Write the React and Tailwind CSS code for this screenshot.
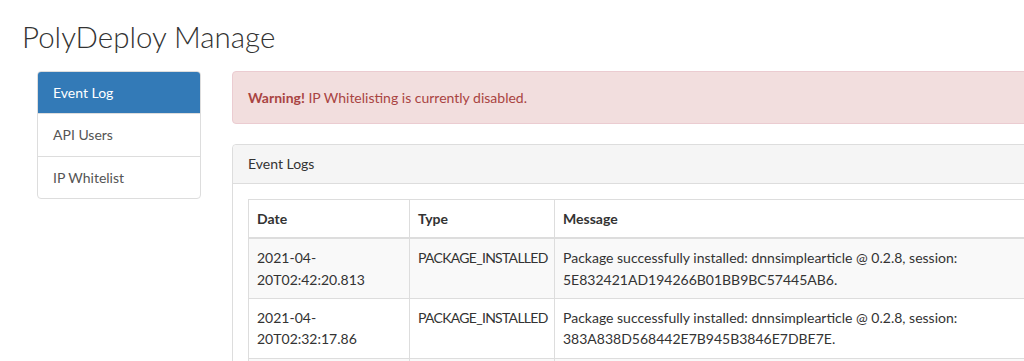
const rows = [
  {
    date: '2021-04-20T02:42:20.813',
    type: 'PACKAGE_INSTALLED',
    message: 'Package successfully installed: dnnsimplearticle @ 0.2.8, session: 5E832421AD194266B01BB9BC57445AB6.',
  },
  {
    date: '2021-04-20T02:32:17.86',
    type: 'PACKAGE_INSTALLED',
    message: 'Package successfully installed: dnnsimplearticle @ 0.2.8, session: 383A838D568442E7B945B3846E7DBE7E.',
  },
  { date: '\u00a0', type: '\u00a0', message: '\u00a0' },
];

const nav = ['Event Log', 'API Users', 'IP Whitelist'];

export default function App() {
  return (
    <div className="w-[1024px] h-[361px] overflow-hidden bg-white font-['Lato',sans-serif] text-[14px] leading-[21.4px] text-[#333]">
      <h2 className="pl-[22px] pt-[20px] text-[29.5px] font-light leading-[33px] text-[#333]">PolyDeploy Manage</h2>

      <div className="flex mt-[18px] pl-[37px]">
        <div className="w-[164px] shrink-0">
          <div className="flex flex-col border border-[#ddd] rounded-[4px] overflow-hidden">
            {nav.map((item, i) => (
              <div
                key={item}
                className={
                  i === 0
                    ? 'px-[15px] py-[10px] bg-[#337ab7] text-white'
                    : 'px-[15px] py-[10px] border-t border-[#ddd] text-[#555]'
                }
              >
                {item}
              </div>
            ))}
          </div>
        </div>

        <div className="ml-[31px] w-[900px] shrink-0">
          <div className="p-[15px] bg-[#f2dede] border border-[#ebccd1] rounded-[4px] text-[#a94442]">
            <strong className="font-bold">Warning!</strong> IP Whitelisting is currently disabled.
          </div>

          <div className="mt-[20px] border border-[#ddd] rounded-[4px]">
            <div className="px-[15px] py-[8px] bg-[#f5f5f5] border-b border-[#ddd] rounded-t-[4px]">Event Logs</div>
            <div className="p-[15px]">
              <table className="w-full table-fixed border-collapse border border-[#ddd]">
                <colgroup>
                  <col className="w-[161px]" />
                  <col className="w-[145px]" />
                  <col />
                </colgroup>
                <thead>
                  <tr>
                    <th className="p-[8px] text-left font-bold border border-[#ddd] border-b-2">Date</th>
                    <th className="p-[8px] text-left font-bold border border-[#ddd] border-b-2">Type</th>
                    <th className="p-[8px] text-left font-bold border border-[#ddd] border-b-2">Message</th>
                  </tr>
                </thead>
                <tbody>
                  {rows.map((r, i) => (
                    <tr key={i} className={i % 2 === 0 ? 'bg-[#f9f9f9]' : 'bg-white'}>
                      <td className="p-[8px] align-top border border-[#ddd]">{r.date}</td>
                      <td className="p-[8px] align-top border border-[#ddd] tracking-[-0.7px]">{r.type}</td>
                      <td className="p-[8px] align-top border border-[#ddd]">{r.message}</td>
                    </tr>
                  ))}
                </tbody>
              </table>
            </div>
          </div>
        </div>
      </div>
    </div>
  );
}
